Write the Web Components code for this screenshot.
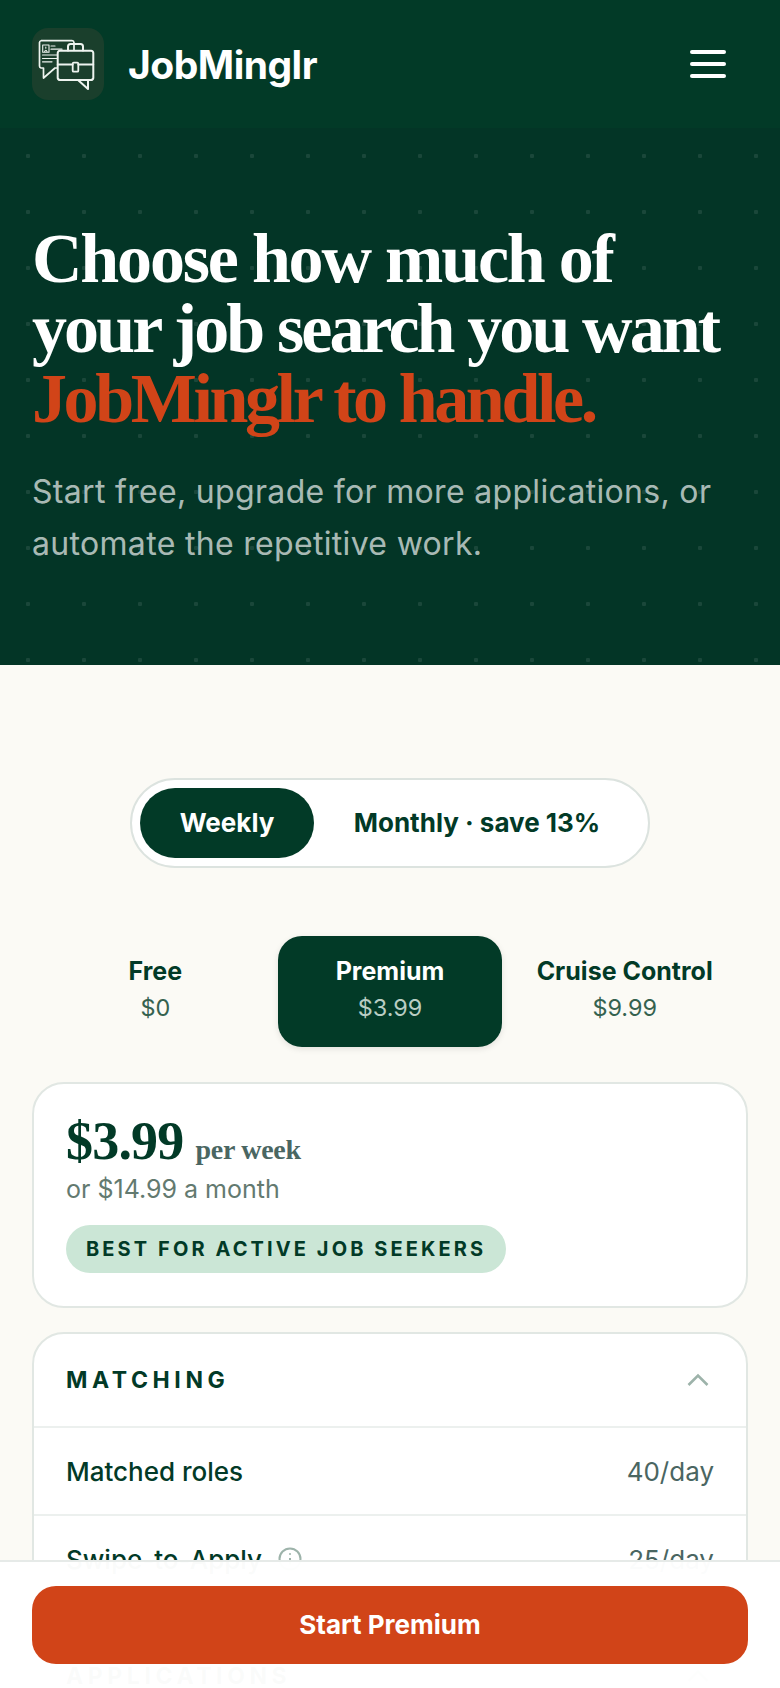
<!DOCTYPE html>
<html>
<head>
<meta charset="utf-8">
<title>JobMinglr pricing</title>
<style>
    html, body { margin: 0; padding: 0; height: 100%; overflow: hidden; }
    body { background: #fbfaf5; font-family: Inter, "Liberation Sans", sans-serif; color: #023a27; }
    main { display: block; padding: 113px 32px 0; }
    /* light dom spans inside the slotted heading */
    jm-hero .l2 { letter-spacing: -2.9px; }
    jm-hero .l3 { letter-spacing: -3.4px; color: #d14418; }
</style>
</head>
<body>
<jm-header></jm-header>
<jm-hero>
    <span slot="title">Choose how much of<br><span class="l2">your job search you want</span><br><span class="l3">JobMinglr to handle.</span></span>
    Start free, upgrade for more applications, or automate the repetitive work.
</jm-hero>
<main>
    <jm-billing-toggle></jm-billing-toggle>
    <jm-plan-tabs></jm-plan-tabs>
    <jm-price-card></jm-price-card>
    <jm-feature-section title="MATCHING" open>
        <jm-feature-row label="Matched roles" value="40/day"></jm-feature-row>
        <jm-feature-row label="Swipe-to-Apply" value="25/day" info></jm-feature-row>
    </jm-feature-section>
    <jm-feature-section title="APPLICATIONS"></jm-feature-section>
</main>
<jm-cta>Start Premium</jm-cta>

<script>
class JmHeader extends HTMLElement {
    constructor() {
        super();
        this.attachShadow({ mode: 'open' });
        this.shadowRoot.innerHTML = `
        <style>
            :host { display: flex; align-items: center; justify-content: space-between; height: 128px; padding: 0 54px 0 32px; box-sizing: border-box; background: #023a27; }
            .brand { display: flex; align-items: center; gap: 24px; color: #fff; font-size: 39px; font-weight: 700; letter-spacing: -0.5px; }
            .tile { width: 72px; height: 72px; border-radius: 16px; background: #1a3f2c; }
            svg { display: block; }
            .burger { display: flex; flex-direction: column; gap: 8px; width: 36px; }
            .burger i { display: block; height: 4px; border-radius: 2px; background: #fff; }
        </style>
        <div class="brand">
            <div class="tile">
                <svg width="72" height="72" viewBox="0 0 72 72" fill="none" stroke="#eef4ef" stroke-width="1.7" stroke-linejoin="round" stroke-linecap="round">
                    <path d="M25 40H23L11.5 50V40H9A2 2 0 0 1 7.5 38V14.5A2 2 0 0 1 9 12.7H40A2 2 0 0 1 42 14.5V22"/>
                    <path d="M10.7 17H17V24.3H10.7Z M12.5 24 Q13.8 20.5 15.2 24 M13.8 20.3V19" stroke-width="1.1"/>
                    <path d="M19 18H23 M19 21.2H30 M10.5 27H25 M10.5 30.5H25 M10.5 33.8H20" stroke-width="1.2"/>
                    <path d="M28 22.7H59A2.4 2.4 0 0 1 61.3 25V50A2.4 2.4 0 0 1 59 52H28A2.4 2.4 0 0 1 25.7 50V25A2.4 2.4 0 0 1 28 22.7Z" stroke-width="2"/>
                    <path d="M36 22.5V18.5A2.5 2.5 0 0 1 38.5 16H48.5A2.5 2.5 0 0 1 51 18.5V22.5" stroke-width="2"/>
                    <path d="M25.7 36.5H40.7 M46.3 36.5H61.3" stroke-width="1.8"/>
                    <rect x="40.7" y="34.7" width="5.6" height="9" rx="1" stroke-width="1.8"/>
                    <path d="M46 52L56 61V52" stroke-width="2"/>
                </svg>
            </div>
            <span>JobMinglr</span>
        </div>
        <div class="burger"><i></i><i></i><i></i></div>`;
    }
}
customElements.define('jm-header', JmHeader);

class JmHero extends HTMLElement {
    constructor() {
        super();
        this.attachShadow({ mode: 'open' });
        this.shadowRoot.innerHTML = `
        <style>
            :host { display: block; height: 537px; box-sizing: border-box; padding: 96px 32px 0; color: rgba(255, 255, 255, .68);
                background-color: #033526;
                background-image: radial-gradient(circle, rgba(255, 255, 255, .09) 2px, transparent 2.5px);
                background-size: 56px 56px;
                font-size: 32px; line-height: 52px; letter-spacing: .32px; }
            h1 { margin: 0 0 32px; color: #fff; font: 700 70px/70px "Liberation Serif", serif; letter-spacing: -2.2px; white-space: nowrap; }
            ::slotted(span) { display: block; }
        </style>
        <h1><slot name="title"></slot></h1>
        <slot></slot>`;
    }
}
customElements.define('jm-hero', JmHero);

class JmBillingToggle extends HTMLElement {
    constructor() {
        super();
        this.attachShadow({ mode: 'open' });
        this.shadowRoot.innerHTML = `
        <style>
            :host { display: flex; width: 520px; height: 90px; margin: 0 auto; box-sizing: border-box; padding: 8px; align-items: stretch; border: 2px solid #dce3df; border-radius: 45px; background: #fff; font-size: 26px; font-weight: 700; }
            div { display: flex; align-items: center; justify-content: center; border-radius: 37px; padding-bottom: 2px; }
            .on { width: 174px; background: #023a27; color: #fff; }
            .off { flex: 1; color: #023a27; }
        </style>
        <div class="on">Weekly</div>
        <div class="off">Monthly · save 13%</div>`;
    }
}
customElements.define('jm-billing-toggle', JmBillingToggle);

class JmPlanTabs extends HTMLElement {
    constructor() {
        super();
        this.attachShadow({ mode: 'open' });
        this.shadowRoot.innerHTML = `
        <style>
            :host { display: grid; grid-template-columns: repeat(3, 1fr); gap: 10px; padding: 0 11px; margin: 68px 0 35px; }
            .tab { display: flex; flex-direction: column; align-items: center; justify-content: center; height: 111px; box-sizing: border-box; padding-bottom: 6px; border-radius: 24px; gap: 4px; white-space: nowrap; }
            b { font-size: 25px; font-weight: 700; line-height: 34px; }
            span { font-size: 23.4px; line-height: 32px; color: #35624f; }
            .on { background: #023a27; color: #fff; box-shadow: 0 2px 6px rgba(0, 0, 0, .1); }
            .on span { color: #b9cdc3; }
        </style>
        <div class="tab"><b>Free</b><span>$0</span></div>
        <div class="tab on"><b>Premium</b><span>$3.99</span></div>
        <div class="tab"><b>Cruise Control</b><span>$9.99</span></div>`;
    }
}
customElements.define('jm-plan-tabs', JmPlanTabs);

class JmPriceCard extends HTMLElement {
    constructor() {
        super();
        this.attachShadow({ mode: 'open' });
        this.shadowRoot.innerHTML = `
        <style>
            :host { display: block; box-sizing: border-box; height: 226px; padding: 28px 32px 0; border: 2px solid #e1e7e3; border-radius: 32px; background: #fff; }
            .price { display: flex; align-items: baseline; gap: 12px; font-family: "Liberation Serif", serif; font-weight: 700; line-height: 58px; }
            .price b { font-size: 54px; letter-spacing: -.8px; color: #023a27; }
            .price span { font-size: 28px; color: #4a6662; letter-spacing: -.3px; }
            .alt { font-size: 25px; line-height: 32px; color: #637a70; margin-top: -6px; }
            .pill { display: inline-block; margin-top: 20px; padding: 0 20px; height: 48px; line-height: 48px; border-radius: 24px; background: #cbe6d6; font-size: 20px; font-weight: 700; letter-spacing: 3.1px; white-space: nowrap; }
        </style>
        <div class="price"><b>$3.99</b><span>per week</span></div>
        <div class="alt">or $14.99 a month</div>
        <div class="pill">BEST FOR ACTIVE JOB SEEKERS</div>`;
    }
}
customElements.define('jm-price-card', JmPriceCard);

class JmFeatureSection extends HTMLElement {
    constructor() {
        super();
        this.attachShadow({ mode: 'open' });
        this.shadowRoot.innerHTML = `
        <style>
            :host { display: block; margin-top: 24px; border: 2px solid #e1e7e3; border-radius: 32px; background: #fff; overflow: hidden; }
            header { display: flex; align-items: center; justify-content: space-between; height: 92px; padding: 0 36px 0 32px; font-size: 23px; font-weight: 700; letter-spacing: 4.6px; }
            svg { display: block; }
        </style>
        <header><span id="title"></span>
            <svg width="24" height="24" viewBox="0 0 24 24" fill="none" stroke="#9db3aa" stroke-width="2.6"><path d="M2.5 17L12 7.5L21.5 17"/></svg>
        </header>
        <slot></slot>`;
    }

    connectedCallback() {
        this.shadowRoot.querySelector('#title').textContent = this.getAttribute('title');
    }
}
customElements.define('jm-feature-section', JmFeatureSection);

class JmFeatureRow extends HTMLElement {
    constructor() {
        super();
        this.attachShadow({ mode: 'open' });
        this.shadowRoot.innerHTML = `
        <style>
            :host { display: flex; align-items: center; justify-content: space-between; height: 88px; padding: 0 32px; border-top: 2px solid #ecf0ee; font-size: 26px; box-sizing: border-box; }
            .label { display: flex; align-items: center; gap: 16px; color: #023a27; font-size: 26px; font-weight: 500; }
            .value { color: #4a6662; }
            svg { display: none; }
            :host([info]) svg { display: block; }
        </style>
        <div class="label"><span id="label"></span>
            <svg width="24" height="24" viewBox="0 0 24 24" fill="none" stroke="#9db3aa" stroke-width="2"><circle cx="12" cy="12" r="10.5"/><path d="M12 11V17.5"/><circle cx="12" cy="7" r="1" fill="#9db3aa" stroke="none"/></svg>
        </div>
        <span class="value" id="value"></span>`;
    }

    connectedCallback() {
        this.shadowRoot.querySelector('#label').textContent = this.getAttribute('label');
        this.shadowRoot.querySelector('#value').textContent = this.getAttribute('value');
    }
}
customElements.define('jm-feature-row', JmFeatureRow);

class JmCta extends HTMLElement {
    constructor() {
        super();
        this.attachShadow({ mode: 'open' });
        this.shadowRoot.innerHTML = `
        <style>
            :host { display: block; position: fixed; left: 0; right: 0; bottom: 0; box-sizing: border-box; height: 128px; padding: 24px 32px 0; border-top: 2px solid #e6eae8; background: rgba(255, 255, 255, .98); }
            button { display: block; width: 100%; height: 78px; border: 0; border-radius: 24px; padding-bottom: 2px; background: #d14418; color: #fff; font: 700 26px Inter, "Liberation Sans", sans-serif; }
        </style>
        <button><slot></slot></button>`;
    }
}
customElements.define('jm-cta', JmCta);
</script>
</body>
</html>
